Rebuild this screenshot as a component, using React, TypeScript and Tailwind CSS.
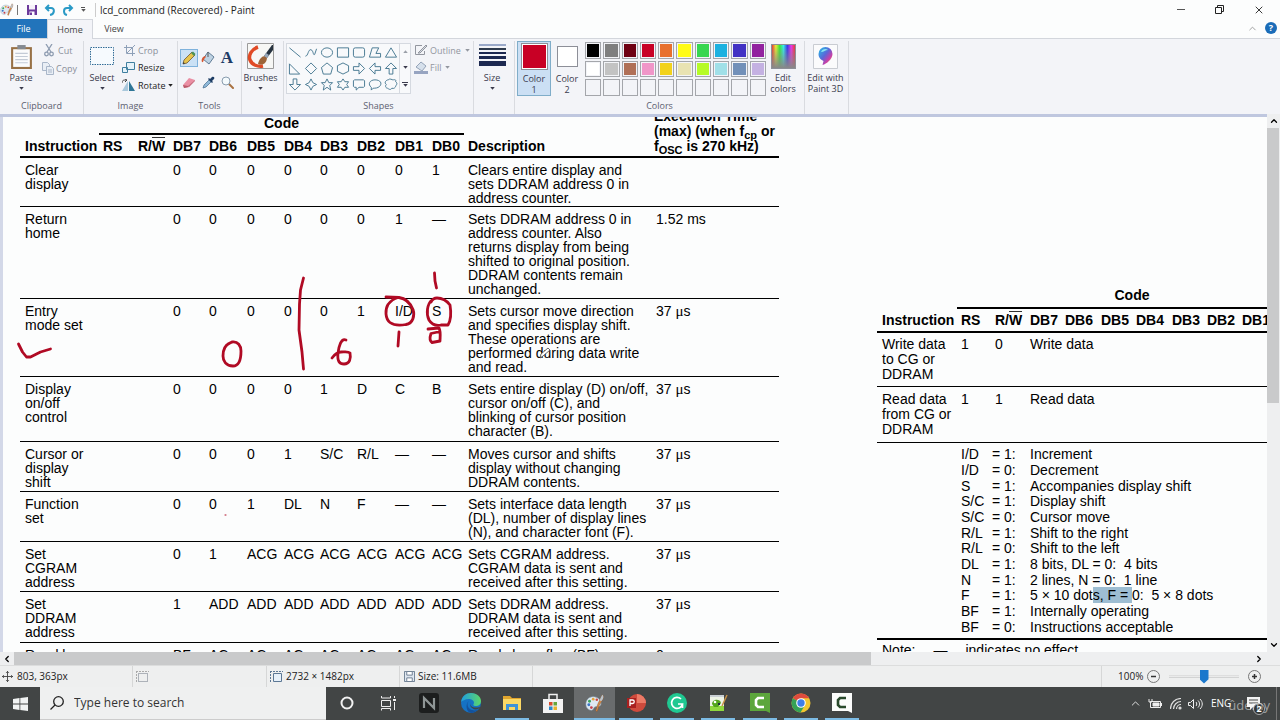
import React from "react";
import { ChevronUp, ChevronDown, ChevronLeft, ChevronRight, X } from "lucide-react";

type Kids = { children?: React.ReactNode };

const Caret = () => (
  <svg viewBox="0 0 6 4" className="h-[3px] w-[5px]" fill="currentColor" aria-hidden="true">
    <path d="M0 0h6L3 3.6z" />
  </svg>
);

function Group({ label, className, children }: Kids & { label?: string; className: string }) {
  return (
    <section className={`flex shrink-0 flex-col border-r border-[#d9dbe0] ${className}`}>
      <div className="flex flex-1">{children}</div>
      <div className="h-4 text-center leading-4 text-[#5c6070]">{label}</div>
    </section>
  );
}

function PaletteIcon({ className }: { className: string }) {
  return (
    <svg viewBox="0 0 22 20" className={className} aria-hidden="true">
      <path d="M9 3C4 3 1 7 1 11.500c0 4 3 6.500 6 6.500 2.500 0 2-2.500 3.500-3.500s6 .5 7-3C18.500 7 14 3 9 3z" fill="#dfe9f2" stroke="#8fa6b8" strokeWidth=".6" />
      <circle cx="5" cy="8" r="1.600" fill="#3ba55d" />
      <circle cx="9" cy="5.800" r="1.500" fill="#e8a33b" />
      <circle cx="4.200" cy="12" r="1.600" fill="#3a76c8" />
      <circle cx="7" cy="15" r="1.500" fill="#c8404a" />
      <circle cx="13" cy="6.500" r="1.400" fill="#c94b4b" />
      <path d="M19 1c1.500 1 1.500 3 .5 5l-4 7-2 6c-1 .5-1.700 0-1.500-1l2-6.500z" fill="#d58b4a" stroke="#8c5428" strokeWidth=".5" />
      <path d="M19 1c1.500 1 1.500 3 .5 5l-1.500 2-2-1z" fill="#b9c3cc" />
    </svg>
  );
}

const shapes = [
  "M1 2l12 10",
  "M1 11c3 0 3-8 6-7s2 7 4 5l2-6",
  "M1 7a6 5 0 1 0 12 0a6 5 0 1 0-12 0z",
  "M1 2h12v10H1z",
  "M3 2h8a2 2 0 0 1 2 2v6a2 2 0 0 1-2 2H3a2 2 0 0 1-2-2V4a2 2 0 0 1 2-2z",
  "M1 12l3-10h7l-3 6h5v4z",
  "M7 2l6 10H1z",
  "M1 2v11h11z",
  "M7 1l6 6-6 6-6-6z",
  "M7 1l6 5-2 7H3L1 6z",
  "M7 1l6 3v6l-6 3-6-3V4z",
  "M1 5h6V1l6 6-6 6V9H1z",
  "M13 5H7V1L1 7l6 6V9h6z",
  "M5 13V7H1l6-6 6 6H9v6z",
  "M5 1v6H1l6 6 6-6H9V1z",
  "M7 1l2 4 4 2-4 2-2 4-2-4-4-2 4-2z",
  "M7 1l2 4h4l-3 3 1 5-4-3-4 3 1-5-3-3h4z",
  "M7 1l2 3h4l-2 3 2 3H9l-2 3-2-3H1l2-3-2-3h4z",
  "M2 2h10l1 1v6l-1 1H7l-3 3v-3H2L1 9V3z",
  "M5 11l-2 2v-3C-1 7 1 2 7 2s8 4 5 7c-2 2-5 2-7 2z",
  "M4 2c2-2 4 0 5 0s4-1 3 2c3 2 0 4 0 5s-2 3-4 2c-2 3-4 0-5 0S0 9 2 7c-3-2 0-5 2-5z",
];

const palette = [
  "#000000", "#7f7f7f", "#6f0012", "#c80025", "#e8702e", "#fffb16", "#38d650", "#1cb1e0", "#4232c4", "#92229f",
  "#ffffff", "#c3c3c3", "#b07057", "#f096c8", "#f2d21c", "#e9e3b2", "#b6fb27", "#a0e0e8", "#7290b9", "#c4b1e2",
  "", "", "", "", "", "", "", "", "", "",
];

function TitleBar() {
  return (
    <header className="flex h-[19px] shrink-0 items-center bg-[#fcfdfd] text-[#222]">
      <PaletteIcon className="h-[15px] w-[14px]" />
      <span className="mx-[3px] h-2.5 w-px bg-[#777]" />
      <button aria-label="Save" className="ml-[5px] w-[14px]">
        <svg viewBox="0 0 12 12" className="h-3 w-3"><path d="M1 1h10v10H1z" fill="#6c3a9c" /><path d="M3 1h6v4.500H3z" fill="#f6f2fa" /><path d="M3.500 7.500h5V11h-5z" fill="#fff" /><path d="M4 8.500h2V11H4z" fill="#6c3a9c" /></svg>
      </button>
      <button aria-label="Undo" className="ml-1 w-[15px]">
        <svg viewBox="0 0 12 12" className="h-3 w-3" fill="none" stroke="#2a9ac6" strokeWidth="2"><path d="M2 4h5c4 0 4 6-1 7" /><path d="M5 1L2 4l3 3" /></svg>
      </button>
      <button aria-label="Redo" className="ml-[3px] w-[15px]">
        <svg viewBox="0 0 12 12" className="h-3 w-3" fill="none" stroke="#2a9ac6" strokeWidth="2"><path d="M10 4H5C1 4 1 10 5 11" /><path d="M7 1l3 3-3 3" /></svg>
      </button>
      <button aria-label="Customize" className="ml-0.5 flex w-2 flex-col items-center gap-px text-[#555]"><span className="h-px w-1 bg-[#555]" /><Caret /></button>
      <span className="mr-1 ml-2 h-3.5 w-px bg-[#ccc]" />
      <h1 className="flex-1 text-[10px] leading-4">lcd_command (Recovered) - Paint</h1>
      <button aria-label="Minimize" className="flex w-[39px] justify-center"><span className="h-px w-2 bg-[#555]" /></button>
      <button aria-label="Restore" className="flex w-[39px] justify-center">
        <svg viewBox="0 0 9 9" className="h-[9px] w-[9px]" fill="none" stroke="#222"><path d="M.5 2.500h6v6h-6zM2.500 2.500v-2h6v6h-2" /></svg>
      </button>
      <button aria-label="Close" className="flex w-[39px] justify-center"><X size={12} strokeWidth={1.8} /></button>
      <span className="w-0.5" />
    </header>
  );
}

function Tabs() {
  return (
    <nav className="flex h-5 shrink-0 items-stretch border-b border-[#d3d6dc] bg-[#fcfdfd] text-[9px] text-[#444]">
      <button className="w-[47px] bg-[#2274bb] text-white">File</button>
      <button className="-mb-px w-[46px] border border-b-0 border-[#d3d6dc] bg-[#f3f4f8]">Home</button>
      <button className="w-[42px]">View</button>
      <span className="flex-1" />
      <button aria-label="Collapse ribbon" className="w-4 text-[#999]"><ChevronUp size={11} /></button>
      <button aria-label="Help" className="mt-[3px] mr-[3px] ml-0.5 h-3 w-3 rounded-full bg-[#1a6cb8] leading-3 font-bold text-white">?</button>
    </nav>
  );
}

function Ribbon() {
  return (
    <div className="flex h-[75px] shrink-0 bg-[#f3f4f8] pt-0.5 text-[9px] leading-[11px] text-[#3a3a4c]">
      <Group label="Clipboard" className="w-[84px]">
        <button className="flex w-[42px] flex-col items-center justify-start pt-[3px]">
          <svg viewBox="0 0 20 24" className="h-[25px] w-[21px]"><path d="M0 3h20v21H0z" fill="#987145" /><path d="M2 5h16v17H2z" fill="#fafbfc" /><path d="M6 1h8v4H6z" fill="#858a91" /><path d="M4 9h12M4 12h12M4 15h12M4 18h12" stroke="#c3cbd6" /></svg>
          <span className="mt-[3px] mb-1">Paste</span>
          <Caret />
        </button>
        <div className="flex flex-col text-[#8a8f9a]">
          <button className="flex h-[18px] items-center gap-1 pl-0.5">
            <svg viewBox="0 0 10 13" className="h-[13px] w-2.5" fill="none" stroke="#8d9bb0" strokeWidth="1.300"><path d="M2 0l5 8M8 0L3 8" /><circle cx="2.500" cy="10" r="1.800" /><circle cx="7.500" cy="10" r="1.800" /></svg>
            Cut
          </button>
          <button className="flex h-[18px] items-center gap-0.5">
            <svg viewBox="0 0 12 13" className="h-[13px] w-3" fill="#e9eef5" stroke="#a9b6c9"><path d="M.5.500h5l2 2v6h-7z" /><path d="M4.500 4.500h5l2 2v6h-7z" /><path d="M6 8h4M6 10h4" /></svg>
            Copy
          </button>
        </div>
      </Group>

      <Group label="Image" className="w-[94px]">
        <button className="flex w-9 flex-col items-center justify-start pt-1.5">
          <svg viewBox="0 0 24 18" className="h-[18px] w-6"><path d="M.5.500h23v17H.5z" fill="#f6fafe" stroke="#326d97" strokeDasharray="1.500 1" /></svg>
          <span className="mt-[7px] mb-1">Select</span>
          <Caret />
        </button>
        <div className="flex flex-col pl-0.5">
          <button className="flex h-[18px] items-center gap-[3px] pl-0.5 text-[#8a8f9a]">
            <svg viewBox="0 0 11 11" className="h-[11px] w-[11px]" fill="none" stroke="#8ea0b8"><path d="M2.500 0v8.500H11M0 2.500h8.500V11M3 8l8-8" /></svg>
            Crop
          </button>
          <button className="flex h-[17px] items-center gap-[3px] text-[#222]">
            <svg viewBox="0 0 13 11" className="h-[11px] w-[13px]" fill="#e5f2fa" stroke="#3f7f9f"><path d="M4.500.500h8v7h-8zM.5 5.500h5v5h-5z" /></svg>
            Resize
          </button>
          <button className="flex h-[18px] items-center gap-[3px] text-[#222]">
            <svg viewBox="0 0 13 12" className="h-3 w-[13px]"><path d="M6 12V2L0 12z" fill="#a9c8dc" /><path d="M7 12V2l6 10z" fill="#2f7697" /><path d="M0 4c0-3 2-3 4-3M3 0l2 1-2 2" fill="none" stroke="#444" /></svg>
            Rotate
            <Caret />
          </button>
        </div>
      </Group>

      <Group label="Tools" className="w-16">
        <div className="grid h-[54px] grid-cols-3 grid-rows-2 items-center justify-items-center gap-x-px pt-[5px] pr-1 pl-0.5">
          <button aria-label="Pencil" className="flex h-[18px] w-[18px] items-center justify-center border border-[#7fb2dc] bg-[#cbe1f5]">
            <svg viewBox="0 0 14 14" className="h-3.5 w-3.5"><path d="M1 13l1-4 8-8 3 3-8 8z" fill="#e6c34d" stroke="#6e5630" strokeWidth=".8" /><path d="M9 2l2-1.500L13.500 3 12 5z" fill="#4a9158" /><path d="M1 13l.5-2 1.500 1.500z" fill="#333" /></svg>
          </button>
          <button aria-label="Fill with color">
            <svg viewBox="0 0 14 14" className="h-3.5 w-3.5"><path d="M7 1l6 5-5 7-6-5z" fill="#bed2e3" stroke="#627e98" /><path d="M4 5c-3 1-4 4-3 6 2 1 1-3 4-5z" fill="#d55935" /><path d="M7 1v5" stroke="#555" /></svg>
          </button>
          <button aria-label="Text" className="font-['Liberation_Serif',serif] text-[17px] leading-4 font-bold text-[#1d3b66]">A</button>
          <button aria-label="Eraser">
            <svg viewBox="0 0 14 12" className="h-3 w-3.5"><path d="M1 8l6-7 6 2-6 7-5 1z" fill="#ea8fa4" /><path d="M1 8l5 1 1 1-5 1z" fill="#b95a6a" /><path d="M6 9l7-6v1l-6 6z" fill="#c56a7c" /></svg>
          </button>
          <button aria-label="Color picker">
            <svg viewBox="0 0 13 13" className="h-[13px] w-[13px]"><path d="M1 12l1-3 5-5 2 2-5 5z" fill="#8fb8d8" stroke="#426a8e" strokeWidth=".7" /><path d="M6 3l1-1 1 1 2-2c2-1 3 1 2 2l-2 2 1 1-1 1z" fill="#1d3c64" /></svg>
          </button>
          <button aria-label="Magnifier">
            <svg viewBox="0 0 13 13" className="h-[13px] w-[13px]"><path d="M8 8l4 4" stroke="#a97142" strokeWidth="2" strokeLinecap="round" /><circle cx="5" cy="5" r="4" fill="#f4fafd" stroke="#899cae" /></svg>
          </button>
        </div>
      </Group>

      <Group className="w-[42px]">
        <button className="flex w-full flex-col items-center justify-start pt-0.5 pr-1">
          <svg viewBox="0 0 27 26" className="h-[26px] w-[27px]"><path d="M.5.500h26v25H.5z" fill="#f7f7f5" stroke="#9b9b9b" /><path d="M11 4C5 6 1 12 3 17s8 7 13 6" fill="none" stroke="#e04a25" strokeWidth="3.500" /><path d="M25 2l-8 11 3 2 6-8V2z" fill="#26323f" /><path d="M20 14c0 6-4 9-9 7 1-5 4-8 7-8z" fill="#9c6438" /><path d="M17 13l2-3 3 2-2 3z" fill="#98a8ba" /></svg>
          <span className="mt-[3px] mb-1">Brushes</span>
          <Caret />
        </button>
      </Group>

      <Group label="Shapes" className="w-[190px]">
        <div className="mt-0.5 ml-0.5 flex h-[51px] w-[125px] border border-[#d5d9e0] bg-[#f8f9fb]">
          <div className="grid flex-1 grid-cols-7 items-center justify-items-center py-px">
            {shapes.map((d, i) => (
              <button key={i} aria-label={`Shape ${i + 1}`}>
                <svg viewBox="0 0 14 14" className="h-[13px] w-3.5" fill="none" stroke="#42758f"><path d={d} /></svg>
              </button>
            ))}
          </div>
          <div className="flex w-[11px] flex-col items-center justify-around border-l border-[#d5d9e0]">
            <button aria-label="Previous shapes" className="rotate-180 text-[#9a9fa8]"><Caret /></button>
            <button aria-label="Next shapes"><Caret /></button>
            <button aria-label="All shapes" className="flex flex-col items-center gap-px"><span className="h-px w-1.5 bg-[#3a3a4c]" /><Caret /></button>
          </div>
        </div>
        <div className="ml-[3px] flex flex-col text-[#92969f]">
          <button className="flex h-[18px] items-center gap-0.5">
            <svg viewBox="0 0 14 12" className="h-3 w-3.5" fill="none" stroke="#92969f"><path d="M8 1.500H1.500v9h9V7" /><path d="M4 9l8-8 1 1-7 7z" fill="#d8dde5" /></svg>
            Outline
            <span className="ml-0.5"><Caret /></span>
          </button>
          <button className="flex h-[17px] items-center gap-0.5">
            <svg viewBox="0 0 14 13" className="h-[13px] w-3.5"><path d="M7 1l5 4-4 5-6-4z" fill="#d6e0ec" stroke="#94a3b8" /><path d="M0 10h14v3H0z" fill="#97a4c1" /></svg>
            Fill
            <span className="ml-0.5"><Caret /></span>
          </button>
        </div>
      </Group>

      <Group className="w-[41px]">
        <button className="flex w-full flex-col items-center justify-start pt-[3px] pr-1">
          <span className="flex h-[22px] w-[27px] flex-col justify-between">
            <span className="h-0.5 bg-[#9aa9c9]" />
            <span className="h-0.5 bg-[#2e3b4e]" />
            <span className="h-0.5 bg-[#1c2850]" />
            <span className="h-[3px] bg-[#1c2850]" />
            <span className="h-[5px] bg-[#1c2850]" />
          </span>
          <span className="mt-1.5 mb-1">Size</span>
          <Caret />
        </button>
      </Group>

      <Group label="Colors" className="w-[290px]">
        <button className="ml-0.5 flex h-[55px] w-[34px] flex-col items-center justify-start border border-[#7fadc9] bg-[#cbdff4] pt-px">
          <span className="h-[27px] w-[27px] border border-[#8d8f98] bg-[#c80025] outline-1 -outline-offset-2 outline-white" />
          <span className="mt-[3px]">Color</span>
          <span>1</span>
        </button>
        <button className="flex h-[55px] w-8 flex-col items-center justify-start pt-[5px]">
          <span className="h-[21px] w-[21px] border border-[#8d8f98] bg-white" />
          <span className="mt-1.5">Color</span>
          <span>2</span>
        </button>
        <div className="mt-px ml-0.5 grid h-[54px] w-[181px] grid-cols-10 grid-rows-3 gap-x-0.5 gap-y-0.5">
          {palette.map((c, i) => (
            <button key={i} aria-label={`Palette color ${i + 1}`} className="border border-[#a4a6ab] p-px">
              <span className="block h-full w-full" style={{ backgroundColor: c || "transparent" }} />
            </button>
          ))}
        </div>
        <button className="flex w-[34px] flex-col items-center justify-start pt-[3px]">
          <span className="h-[25px] w-[25px] border border-[#8d8f98] bg-[linear-gradient(to_bottom,transparent,#888),linear-gradient(to_right,#e33,#ee3,#3e3,#3ee,#33e,#e3e,#e33)]" />
          <span className="mt-[3px]">Edit</span>
          <span>colors</span>
        </button>
      </Group>

      <Group className="w-[44px]">
        <button className="flex w-full flex-col items-center justify-start pt-[3px] pr-0.5">
          <svg viewBox="0 0 25 25" className="h-[25px] w-[25px]">
            <defs><linearGradient id="p3d" x1="0" y1="0" x2="1" y2="1"><stop offset="0" stopColor="#20c5e8" /><stop offset=".45" stopColor="#5b66d8" /><stop offset=".7" stopColor="#c83fa8" /><stop offset="1" stopColor="#f5a623" /></linearGradient></defs>
            <path d="M.5.500h24v24H.5z" fill="#fbfbfc" stroke="#c9ccd2" />
            <path d="M12.500 3a7 7 0 0 0-7 7c0 4 3 6 5 7l-1 4c4-1 10-6 10-11a7 7 0 0 0-7-7z" fill="url(#p3d)" />
            <path d="M8 8c1-3 5-4 7-2-3 0-4 2-7 2z" fill="#8be5f4" />
          </svg>
          <span className="mt-[3px] whitespace-nowrap">Edit with</span>
          <span className="whitespace-nowrap">Paint 3D</span>
        </button>
      </Group>
    </div>
  );
}

const Micro = ({ n }: { n: number }) => (
  <>
    {n} <span className="font-['Liberation_Serif',serif] text-[15px]">μ</span>s
  </>
);

type Row = { h: string; name: string[]; bits: string[]; desc: string[]; time?: React.ReactNode };

const rows: Row[] = [
  { h: "h-[49px]", name: ["Clear", "display"], bits: ["0", "0", "0", "0", "0", "0", "0", "1"], desc: ["Clears entire display and", "sets DDRAM address 0 in", "address counter."] },
  { h: "h-[92px]", name: ["Return", "home"], bits: ["0", "0", "0", "0", "0", "0", "1", "—"], desc: ["Sets DDRAM address 0 in", "address counter. Also", "returns display from being", "shifted to original position.", "DDRAM contents remain", "unchanged."], time: "1.52 ms" },
  { h: "h-[78px]", name: ["Entry", "mode set"], bits: ["0", "0", "0", "0", "0", "1", "I/D", "S"], desc: ["Sets cursor move direction", "and specifies display shift.", "These operations are", "performed during data write", "and read."], time: <Micro n={37} /> },
  { h: "h-[65px]", name: ["Display", "on/off", "control"], bits: ["0", "0", "0", "0", "1", "D", "C", "B"], desc: ["Sets entire display (D) on/off,", "cursor on/off (C), and", "blinking of cursor position", "character (B)."], time: <Micro n={37} /> },
  { h: "h-[50px]", name: ["Cursor or", "display", "shift"], bits: ["0", "0", "0", "1", "S/C", "R/L", "—", "—"], desc: ["Moves cursor and shifts", "display without changing", "DDRAM contents."], time: <Micro n={37} /> },
  { h: "h-[50px]", name: ["Function", "set"], bits: ["0", "0", "1", "DL", "N", "F", "—", "—"], desc: ["Sets interface data length", "(DL), number of display lines", "(N), and character font (F)."], time: <Micro n={37} /> },
  { h: "h-[50px]", name: ["Set", "CGRAM", "address"], bits: ["0", "1", "ACG", "ACG", "ACG", "ACG", "ACG", "ACG"], desc: ["Sets CGRAM address.", "CGRAM data is sent and", "received after this setting."], time: <Micro n={37} /> },
  { h: "h-[51px]", name: ["Set", "DDRAM", "address"], bits: ["1", "ADD", "ADD", "ADD", "ADD", "ADD", "ADD", "ADD"], desc: ["Sets DDRAM address.", "DDRAM data is sent and", "received after this setting."], time: <Micro n={37} /> },
  { h: "h-[50px]", name: ["Read busy"], bits: ["BF", "AC", "AC", "AC", "AC", "AC", "AC", "AC"], desc: ["Reads busy flag (BF)"], time: "0" },
];

const Lines = ({ of }: { of: string[] }) => (
  <>
    {of.map((t) => (
      <span key={t} className="block whitespace-nowrap">{t}</span>
    ))}
  </>
);

const cell = "border-b border-black pt-[5px] pl-1 align-top";
const head = "border-b-2 border-black pl-1 pb-[3px] align-bottom";

function MainTable() {
  return (
    <table className="-mt-2.5 ml-[17px] w-[759px] shrink-0 table-fixed border-separate border-spacing-0 text-left text-[14px] leading-[14px]">
      <colgroup>
        <col className="w-[79px]" />
        <col className="w-[35px]" />
        <col className="w-[35px]" />
        <col className="w-[36px]" />
        <col className="w-[38px]" />
        <col className="w-[37px]" />
        <col className="w-[36px]" />
        <col className="w-[37px]" />
        <col className="w-[38px]" />
        <col className="w-[37px]" />
        <col className="w-[36px]" />
        <col className="w-[188px]" />
        <col />
      </colgroup>
      <thead>
        <tr className="h-7">
          <td />
          <th colSpan={10} className="border-b-2 border-black pb-[3px] text-center align-bottom">Code</th>
          <td />
          <th rowSpan={2} className="border-b-2 border-black pb-0.5 pl-0.5 align-bottom leading-[15px] whitespace-nowrap">
            Execution Time<br />
            (max) (when f<sub className="text-[11px] leading-0">cp</sub> or<br />
            f<sub className="text-[11px] leading-0">OSC</sub> is 270 kHz)
          </th>
        </tr>
        <tr className="h-[23px]">
          <th className="border-b-2 border-black pb-[3px] pl-[5px] align-bottom">Instruction</th>
          <th className={head}>RS</th>
          <th className={head}>R/<span className="border-t border-[#333]">W</span></th>
          {[7, 6, 5, 4, 3, 2, 1, 0].map((n) => (
            <th key={n} className={head}>DB{n}</th>
          ))}
          <th className={head}>Description</th>
        </tr>
      </thead>
      <tbody>
        {rows.map((r) => (
          <tr key={r.name.join()} className={r.h}>
            <td className="border-b border-black pt-[5px] pl-[5px] align-top"><Lines of={r.name} /></td>
            <td className={cell} />
            <td className={cell} />
            {r.bits.map((b, i) => (
              <td key={i} className={cell}>{b}</td>
            ))}
            <td className={cell}><Lines of={r.desc} /></td>
            <td className={cell}>{r.time}</td>
          </tr>
        ))}
      </tbody>
    </table>
  );
}

const legend: [string, string, React.ReactNode][] = [
  ["I/D", "= 1:", "Increment"],
  ["I/D", "= 0:", "Decrement"],
  ["S", "= 1:", "Accompanies display shift"],
  ["S/C", "= 1:", "Display shift"],
  ["S/C", "= 0:", "Cursor move"],
  ["R/L", "= 1:", "Shift to the right"],
  ["R/L", "= 0:", "Shift to the left"],
  ["DL", "= 1:", <>8 bits, DL = 0:&nbsp; 4 bits</>],
  ["N", "= 1:", <>2 lines, N = 0:&nbsp; 1 line</>],
  ["F", "= 1:", <>5 × 10 dot<mark className="bg-[#9dbdd2] text-black">s, F = </mark>0:&nbsp; 5 × 8 dots</>],
  ["BF", "= 1:", "Internally operating"],
  ["BF", "= 0:", "Instructions acceptable"],
];

function SideTable() {
  return (
    <div className="mt-[169px] ml-[98px] w-[430px] shrink-0 text-[14px] leading-[15px]">
      <table className="w-full table-fixed border-separate border-spacing-0 text-left">
        <colgroup>
          <col className="w-20" />
          <col className="w-[34px]" />
          <col className="w-[35px]" />
          <col className="w-[35px]" />
          <col className="w-[36px]" />
          <col className="w-[35px]" />
          <col className="w-[36px]" />
          <col className="w-[35px]" />
          <col className="w-[35px]" />
          <col />
        </colgroup>
        <thead>
          <tr className="h-[23px]">
            <td />
            <th colSpan={9} className="border-b-2 border-black pb-1 text-center align-bottom">Code</th>
          </tr>
          <tr className="h-6">
            <th className="border-b-2 border-black pb-[3px] pl-[5px] align-bottom">Instruction</th>
            <th className={head}>RS</th>
            <th className={head}>R/<span className="border-t border-[#333]">W</span></th>
            {[7, 6, 5, 4, 3, 2, 1].map((n) => (
              <th key={n} className={head}>DB{n}</th>
            ))}
          </tr>
        </thead>
        <tbody>
          <tr className="h-[54px]">
            <td className="border-b border-black pt-1 pl-[5px] align-top"><Lines of={["Write data", "to CG or", "DDRAM"]} /></td>
            <td className="border-b border-black pt-1 pl-1 align-top">1</td>
            <td className="border-b border-black pt-1 pl-1 align-top">0</td>
            <td colSpan={7} className="border-b border-black pt-1 pl-1 align-top">Write data</td>
          </tr>
          <tr className="h-14">
            <td className="border-b border-black pt-[5px] pl-[5px] align-top"><Lines of={["Read data", "from CG or", "DDRAM"]} /></td>
            <td className={cell}>1</td>
            <td className={cell}>1</td>
            <td colSpan={7} className={cell}>Read data</td>
          </tr>
        </tbody>
      </table>
      <div className="grid h-[197px] grid-rows-12 border-b-2 border-black pt-1 pb-[3px] pl-[84px]">
        {legend.map(([k, v, t]) => (
          <div key={k + v} className="flex items-center">
            <span className="w-[31px]">{k}</span>
            <span className="w-[38px]">{v}</span>
            <span className="whitespace-nowrap">{t}</span>
          </div>
        ))}
      </div>
      <p className="flex gap-[18px] pt-[3px] pl-[5px]">Note:<span>—</span><span>indicates no effect.</span></p>
    </div>
  );
}

function Ink() {
  return (
    <svg viewBox="3 117 777 535" className="pointer-events-none absolute top-0 left-0 h-[535px] w-[777px]" aria-hidden="true">
      <g fill="none" stroke="#b00a24" strokeWidth="2.800" strokeLinecap="round" strokeLinejoin="round">
        <path d="M303.500 278l-3 12-1 14-.5 26 3 22 1.500 17" />
        <path d="M18.500 344l4 8 4 5h4l10-5 10-3" />
        <path d="M228 344l4-2c6-1 9 4 9 9 0 8-2 15-8 15-7 0-10-5-10-10 0-6 2-11 7-13" />
        <path d="M346 340c-5-2-7 6-8 13-1 9 2 11 6 11 6 0 7-6 6-11-2-2-6-1-9-1-4 0-6 2-9 6" />
        <path d="M386 297l13 .5c7 1 11 5 14 12 2 6 0 14-7 15-5 1-12 1-16-2-5-4-5-13-2-18 3-4 6-6 10-7" />
        <path d="M432 300c-5 4-6 14-3 20 3 5 7 6 12 5h7c3-5 3-14 2-20-3-4-8-7-13-7-3 0-5 2-6 4" />
        <path d="M434.500 273l.5 8 1.500 7" />
        <path d="M399 332l-1 14" />
        <path d="M428 329l11-1c2 4 1 9 1 13l-8 1.500c-3-2-2-6-1-9l9-2" />
        <path d="M225 515h1" strokeWidth="1" />
      </g>
      <path d="M540 358l1-4 7-6 2 2-7 6z" fill="#fff" stroke="#444" strokeWidth=".8" />
    </svg>
  );
}

function Workspace() {
  return (
    <div className="flex min-h-0 flex-1 bg-[#bfc7df]">
      <div className="mt-[3px] w-[3px] shrink-0 bg-[#d3d8e8]" />
      <div className="mt-[3px] min-w-0 flex-1 overflow-hidden bg-[#fcfdfd] font-['Liberation_Sans',Arial,sans-serif] text-black">
        <div className="relative flex h-0 items-start">
          <MainTable />
          <SideTable />
          <Ink />
        </div>
      </div>
      <div className="flex w-[13px] shrink-0 flex-col items-center bg-[#eeeff0]">
        <button aria-label="Scroll up" className="flex h-3.5 items-center"><ChevronUp size={10} strokeWidth={3} /></button>
        <div className="mr-px h-[275px] w-3 bg-[#c9cacb]" />
        <button aria-label="Scroll down" className="mt-auto flex h-3.5 items-center"><ChevronDown size={10} strokeWidth={3} /></button>
      </div>
    </div>
  );
}

function StatusBar() {
  return (
    <footer className="flex h-[22px] shrink-0 items-stretch border-t border-[#dcdddd] bg-[#eeefef] text-[10px] text-[#222]">
      <div className="flex w-[133px] items-center gap-1 border-r border-[#d6d7d7] pl-0.5">
        <svg viewBox="0 0 12 12" className="h-[11px] w-[11px]" fill="none" stroke="#444"><path d="M6 0v12M0 6h12M4.500 2L6 .500 7.500 2M4.500 10L6 11.500 7.500 10M2 4.500L.5 6 2 7.500M10 4.500L11.500 6 10 7.500" /></svg>
        803, 363px
      </div>
      <div className="flex w-[134px] items-center border-r border-[#d6d7d7] pl-[3px]">
        <svg viewBox="0 0 13 12" className="h-3 w-[13px]" fill="none" stroke="#6d7583"><path d="M2.500 2.500h9v8h-9z" strokeDasharray="1 1" /><path d="M0 .5h13M.5 0v12" strokeDasharray="2 1" stroke="#aaa" /></svg>
      </div>
      <div className="flex w-[133px] items-center gap-[3px] border-r border-[#d6d7d7] pl-[3px]">
        <svg viewBox="0 0 13 12" className="h-3 w-[13px]" fill="none" stroke="#5d7895"><path d="M3.500 2.500h8v8h-8z" fill="#e7f1fa" /><path d="M0 .5h13M.5 0v12" strokeDasharray="2 1" /></svg>
        2732 × 1482px
      </div>
      <div className="flex w-[133px] items-center gap-[3px] border-r border-[#d6d7d7] pl-1">
        <svg viewBox="0 0 12 12" className="h-[11px] w-[11px]" fill="#dfe7f0" stroke="#66788c"><path d="M.5.500h11v11H.5z" /><path d="M3 .5h6v4H3zM3 7.500h6v4H3z" fill="#fff" /></svg>
        Size: 11.6MB
      </div>
      <div className="ml-auto flex items-center border-l border-[#d6d7d7] pr-[19px] pl-4">
        <label htmlFor="zoom" className="w-[29px]">100%</label>
        <ZoomButton label="Zoom out" d="M4 6.500h5" />
        <input id="zoom" type="range" min={0} max={100} defaultValue={50} className="mx-[9px] h-3.5 w-[70px] appearance-none bg-[linear-gradient(to_bottom,transparent_5px,#c6c7c7_5px,#f6f6f6_6px,#c6c7c7_8px,transparent_8px)] [&::-webkit-slider-thumb]:h-3.5 [&::-webkit-slider-thumb]:w-[9px] [&::-webkit-slider-thumb]:appearance-none [&::-webkit-slider-thumb]:bg-[#1b78cc] [&::-webkit-slider-thumb]:[clip-path:polygon(0_0,100%_0,100%_70%,50%_100%,0_70%)]" />
        <ZoomButton label="Zoom in" d="M4 6.500h5M6.500 4v5" />
      </div>
    </footer>
  );
}

function ZoomButton({ label, d }: { label: string; d: string }) {
  return (
    <button aria-label={label}>
      <svg viewBox="0 0 13 13" className="h-[13px] w-[13px]" fill="none"><circle cx="6.500" cy="6.500" r="6" stroke="#777" /><path d={d} stroke="#333" strokeWidth="1.500" /></svg>
    </button>
  );
}

type TaskApp = { name: string; mark?: boolean; active?: boolean; icon: React.ReactNode };

const sz = "h-5 w-5";
const apps: TaskApp[] = [
  { name: "Cortana", icon: <svg viewBox="0 0 20 20" className={sz}><circle cx="10" cy="10" r="5.500" fill="none" stroke="#f2f2f2" strokeWidth="2" /></svg> },
  { name: "Task view", icon: <svg viewBox="0 0 20 20" className={sz} fill="none" stroke="#eee"><path d="M3.500 7.500h9v6h-9zM3.500 3v2h9V3M3.500 17.500v-2h9v2M16.500 3v2M16.500 9v8" /><path d="M15 7h3" strokeWidth="2" /></svg> },
  { name: "N", icon: <svg viewBox="0 0 20 20" className={sz}><rect width="20" height="20" rx="3" fill="#1c1e1e" /><path d="M5 15V5l10 10V5" fill="none" stroke="#8f9696" strokeWidth="2.200" /></svg> },
  {
    name: "Edge",
    icon: (
      <svg viewBox="0 0 20 20" className={sz}>
        <defs><linearGradient id="edge" x1="0" x2="1"><stop offset="0" stopColor="#1e9de0" /><stop offset="1" stopColor="#5cd66a" /></linearGradient></defs>
        <circle cx="10" cy="10" r="10" fill="#1572c4" />
        <path d="M0 9C1 3 5 0 10 0c6 0 10 4 10 8 0 4-3 5-5 5-3 0-3-1-2-3 0-3-3-4-5-4-4 0-7 2-8 3z" fill="url(#edge)" />
        <path d="M8 8c-3 3-1 8 3 9 3 1 6 0 7-2-2 3-5 5-8 5C5 19 4 11 8 8z" fill="#14529c" />
        <path d="M9.500 9c-1 2 0 5 4 5.500 2 0 5 0 6-1-1 2-3 3-5 3-4-.5-6.500-4-5-7.500z" fill="#424545" />
      </svg>
    ),
  },
  { name: "File Explorer", mark: true, icon: <svg viewBox="0 0 20 20" className={sz}><path d="M1 3h7l2 2h9v12H1z" fill="#e0a52e" /><path d="M1 6h18v11H1z" fill="#fbd865" /><path d="M4 17v-6h12v6h-3v-3H7v3z" fill="#3f93d8" /></svg> },
  { name: "Store", icon: <svg viewBox="0 0 20 20" className={sz}><path d="M6 6V1.500h8V6" fill="none" stroke="#f2f2f2" strokeWidth="1.500" /><path d="M0 6h20v14H0z" fill="#f2f2f2" /><path d="M6 9h3.500v3.500H6z" fill="#d94a2b" /><path d="M10.500 9H14v3.500h-3.500z" fill="#66a53b" /><path d="M6 13.500h3.500V17H6z" fill="#2b87c8" /><path d="M10.500 13.500H14V17h-3.500z" fill="#e8b32d" /></svg> },
  { name: "Paint", mark: true, active: true, icon: <PaletteIcon className={sz} /> },
  { name: "PowerPoint", mark: true, icon: <svg viewBox="0 0 20 20" className={sz}><circle cx="11" cy="10" r="9" fill="#cf4a3c" /><path d="M11 1a9 9 0 0 1 9 9h-9z" fill="#ec7a66" /><path d="M1 5h9v10H1z" fill="#a8201f" /><path d="M4 13V7h2.500a1.700 1.700 0 0 1 0 3.500H4" fill="none" stroke="#fff" strokeWidth="1.300" /></svg> },
  { name: "Grammarly", mark: true, icon: <svg viewBox="0 0 20 20" className={sz}><circle cx="10" cy="10" r="10" fill="#1fc891" /><path d="M14 6a5.500 5.500 0 1 0 1.500 5H11M15.500 11v4" fill="none" stroke="#fff" strokeWidth="1.700" /></svg> },
  { name: "Notepad++", mark: true, icon: <svg viewBox="0 0 20 20" className={sz}><path d="M2 2h14v16H2z" fill="#edf3e6" /><path d="M2 2h14v2H2z" fill="#c9cfd4" /><path d="M2 13h14v5H2z" fill="#8fd83e" /><path d="M4 11c0-5 8-6 9-1l-3 4H6z" fill="#53a51c" /><circle cx="7" cy="9" r="1.300" fill="#fff" /><path d="M10 10h2v2h-2z" fill="#234" /><path d="M19 2l-5 11" stroke="#c69045" strokeWidth="1.500" /></svg> },
  { name: "Camtasia", mark: true, icon: <svg viewBox="0 0 20 20" className={sz}><path d="M0 0h20v20l-4-2H0z" fill="#5ca63c" /><path d="M14 5H8L6 7v5l2 2h6" fill="none" stroke="#fff" strokeWidth="2.600" /></svg> },
  { name: "Chrome", mark: true, icon: <svg viewBox="0 0 20 20" className={sz}><circle cx="10" cy="10" r="9.500" fill="#f2c62f" /><path d="M10 10L1.800 5.200A9.500 9.500 0 0 1 18.200 5.300H10z" fill="#dd4b3e" /><path d="M1.800 5.200A9.500 9.500 0 0 0 9.500 19.500L14 12l-4-2z" fill="#35a257" /><circle cx="10" cy="10" r="4.800" fill="#fff" /><circle cx="10" cy="10" r="3.700" fill="#3f7ee8" /></svg> },
  { name: "Camtasia Recorder", mark: true, icon: <svg viewBox="0 0 20 20" className={sz}><path d="M0 0h20v20l-4-2H0z" fill="#fbfcfb" /><path d="M14 5H8L6 7v5l2 2h6" fill="none" stroke="#294a2c" strokeWidth="2.600" /></svg> },
];

function Taskbar() {
  return (
    <div className="flex h-[33px] shrink-0 items-stretch bg-[#424545] text-white">
      <button aria-label="Start" className="flex w-10 items-center justify-center">
        <svg viewBox="0 0 15 14" className="h-3.5 w-[15px]" fill="#f1f3f3"><path d="M0 2l6.500-1v5.600H0zM7.300.900L15 0v6.600H7.300zM0 7.400h6.500V13L0 12zM7.300 7.400H15V14l-7.700-1z" /></svg>
      </button>
      <label className="flex w-[286px] items-center gap-2.5 border-b border-[#ccc] bg-[#eff0f0] pl-2.5 text-[#333]">
        <svg viewBox="0 0 14 14" className="h-3.5 w-3.5 shrink-0" fill="none" stroke="#222" strokeWidth="1.300"><circle cx="8.500" cy="5.500" r="4.800" /><path d="M5 9l-4.500 4.500" /></svg>
        <input aria-label="Search" placeholder="Type here to search" className="w-full bg-transparent text-[12px] outline-none placeholder:text-[#333]" />
      </label>
      <div className="flex w-[537px]">
        {apps.map((a) => (
          <button key={a.name} aria-label={a.name} className={`flex flex-1 flex-col items-center justify-between ${a.active ? "bg-[#696c6d]" : ""}`}>
            <span className="pt-1.5">{a.icon}</span>
            <span className={`h-0.5 ${a.active ? "w-full" : "w-[34px]"} ${a.mark ? "bg-[#7cbbe4]" : ""}`} />
          </button>
        ))}
      </div>
      <div className="relative ml-auto flex items-center pr-[3px]">
        <button aria-label="Hidden icons" className="w-5"><ChevronUp size={13} strokeWidth={1.5} className="mx-auto" /></button>
        <svg viewBox="0 0 15 12" className="mr-[7px] ml-[3px] h-3 w-[15px]" fill="none" stroke="#eee"><path d="M2.500 3.500h10v6h-10zM13.500 5v3" /><path d="M5 5h6v3H5z" fill="#eee" /><path d="M1 1v3h3V1" /></svg>
        <svg viewBox="0 0 12 12" className="mr-1.5 h-3 w-3" fill="none" stroke="#ddd" strokeWidth="1.200"><path d="M.5 11C.5 5 5 .5 11 .5M3.500 11C3.500 7 7 3.500 11 3.500M6.500 11c0-2.500 2-4.500 4.500-4.500" /><circle cx="10" cy="10" r="1" fill="#ddd" /></svg>
        <svg viewBox="0 0 15 12" className="mr-2 h-3 w-[15px]" fill="none" stroke="#eee"><path d="M.5 4.500h2l3-3v9l-3-3h-2zM8 4c1 1 1 3 0 4M10 2.500c2 2 2 5 0 7M12 1c3 3 3 7 0 10" /></svg>
        <span className="w-[35px] text-[10px]">ENG</span>
        <button aria-label="Notifications" className="relative mr-[15px] h-4 w-[15px]">
          <svg viewBox="0 0 15 16" className="h-4 w-[15px]"><path d="M1 1h13v10H7l-3 3v-3H1z" fill="#f3f3f3" /><path d="M3 4h9M3 7h9" stroke="#424545" /></svg>
          <span className="absolute top-[7px] left-[7px] h-3 w-3 rounded-full border border-[#aaa] bg-[#333636] text-[9px] leading-[10px] font-bold">2</span>
        </button>
        <span className="h-full w-px bg-[#777]" />
        <span className="absolute top-2.5 right-2.5 text-[13px] leading-4 text-white/50">ûdemy</span>
      </div>
    </div>
  );
}

export default function App() {
  return (
    <main className="flex h-screen flex-col overflow-hidden bg-[#f3f4f8] font-['Open_Sans','Noto_Sans',sans-serif]">
      <TitleBar />
      <Tabs />
      <Ribbon />
      <Workspace />
      <div className="flex h-[13px] shrink-0 items-center bg-[#eeeff0] pr-[13px]">
        <button aria-label="Scroll left" className="flex w-3.5 justify-center"><ChevronLeft size={10} strokeWidth={3} /></button>
        <div className="h-full flex-[857] bg-[#c9cacb]" />
        <div className="flex flex-[396] justify-end">
          <button aria-label="Scroll right" className="flex w-4 items-center justify-center"><ChevronRight size={10} strokeWidth={3} /></button>
        </div>
      </div>
      <StatusBar />
      <Taskbar />
    </main>
  );
}
